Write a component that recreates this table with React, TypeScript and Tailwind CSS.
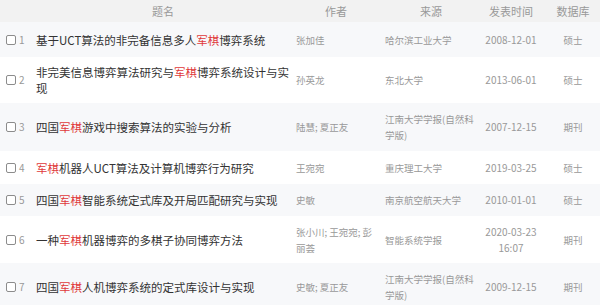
import React from "react";

type Row = {
  no: number;
  title: [string, boolean][];
  author: string;
  source: string;
  date: string;
  db: string;
  h: number;
};

const rows: Row[] = [
  {
    no: 1,
    title: [["基于UCT算法的非完备信息多人", false], ["军棋", true], ["博弈系统", false]],
    author: "张加佳",
    source: "哈尔滨工业大学",
    date: "2008-12-01",
    db: "硕士",
    h: 35,
  },
  {
    no: 2,
    title: [["非完美信息博弈算法研究与", false], ["军棋", true], ["博弈系统设计与实现", false]],
    author: "孙英龙",
    source: "东北大学",
    date: "2013-06-01",
    db: "硕士",
    h: 46,
  },
  {
    no: 3,
    title: [["四国", false], ["军棋", true], ["游戏中搜索算法的实验与分析", false]],
    author: "陆慧; 夏正友",
    source: "江南大学学报(自然科学版)",
    date: "2007-12-15",
    db: "期刊",
    h: 48,
  },
  {
    no: 4,
    title: [["军棋", true], ["机器人UCT算法及计算机博弈行为研究", false]],
    author: "王宛宛",
    source: "重庆理工大学",
    date: "2019-03-25",
    db: "硕士",
    h: 33,
  },
  {
    no: 5,
    title: [["四国", false], ["军棋", true], ["智能系统定式库及开局匹配研究与实现", false]],
    author: "史敏",
    source: "南京航空航天大学",
    date: "2010-01-01",
    db: "硕士",
    h: 32,
  },
  {
    no: 6,
    title: [["一种", false], ["军棋", true], ["机器博弈的多棋子协同博弈方法", false]],
    author: "张小川; 王宛宛; 彭丽荟",
    source: "智能系统学报",
    date: "2020-03-23 16:07",
    db: "期刊",
    h: 47,
  },
  {
    no: 7,
    title: [["四国", false], ["军棋", true], ["人机博弈系统的定式库设计与实现", false]],
    author: "史敏; 夏正友",
    source: "江南大学学报(自然科学版)",
    date: "2009-12-15",
    db: "期刊",
    h: 47,
  },
];

const font = { fontFamily: '"Noto Sans CJK SC", "Noto Sans", sans-serif' };

const App = () => {
  return (
    <div className="w-[600px] h-[305px] overflow-hidden bg-white" style={font}>
      <table className="w-[606px] table-fixed border-collapse">
        <colgroup>
          <col className="w-[34px]" />
          <col className="w-[258px]" />
          <col className="w-[88px]" />
          <col className="w-[102px]" />
          <col className="w-[58px]" />
          <col className="w-[66px]" />
        </colgroup>
        <thead>
          <tr className="h-[22px] bg-[#f2f2f2] text-[11px] text-[#999]">
            <th className="p-0 font-normal"></th>
            <th className="p-0 font-normal">题名</th>
            <th className="p-0 font-normal">作者</th>
            <th className="p-0 font-normal">来源</th>
            <th className="p-0 font-normal">发表时间</th>
            <th className="p-0 font-normal">数据库</th>
          </tr>
        </thead>
        <tbody>
          {rows.map((r, i) => (
            <tr
              key={r.no}
              className={i % 2 === 0 ? "bg-[#f7f8fa]" : "bg-white"}
              style={{ height: r.h }}
            >
              <td className="p-0 align-middle">
                <div className="flex items-center pl-[6px]">
                  <span className="w-[10px] h-[10px] border border-[#8c8c8c] rounded-[2px] bg-white"></span>
                  <span className="ml-[3px] text-[10px] text-[#999] leading-none">{r.no}</span>
                </div>
              </td>
              <td className="p-0 pl-[2px] align-middle text-[11.5px] leading-[16px] text-[#333]">
                {r.title.map(([t, red], k) =>
                  red ? (
                    <span key={k} className="text-[#e03a3a]">
                      {t}
                    </span>
                  ) : (
                    <span key={k}>{t}</span>
                  )
                )}
              </td>
              <td className="p-0 pl-[4px] pr-[4px] align-middle text-[9.5px] leading-[16px] text-[#999]">
                {r.author}
              </td>
              <td className="p-0 pl-[5px] align-middle text-[9.5px] leading-[16px] text-[#999]">
                <div className="w-[90px]">{r.source}</div>
              </td>
              <td className="p-0 px-[2px] align-middle text-center text-[10px] leading-[16px] text-[#999]">
                {r.date}
              </td>
              <td className="p-0 align-middle text-center text-[9.5px] leading-[16px] text-[#999]">
                {r.db}
              </td>
            </tr>
          ))}
        </tbody>
      </table>
    </div>
  );
};

export default App;
